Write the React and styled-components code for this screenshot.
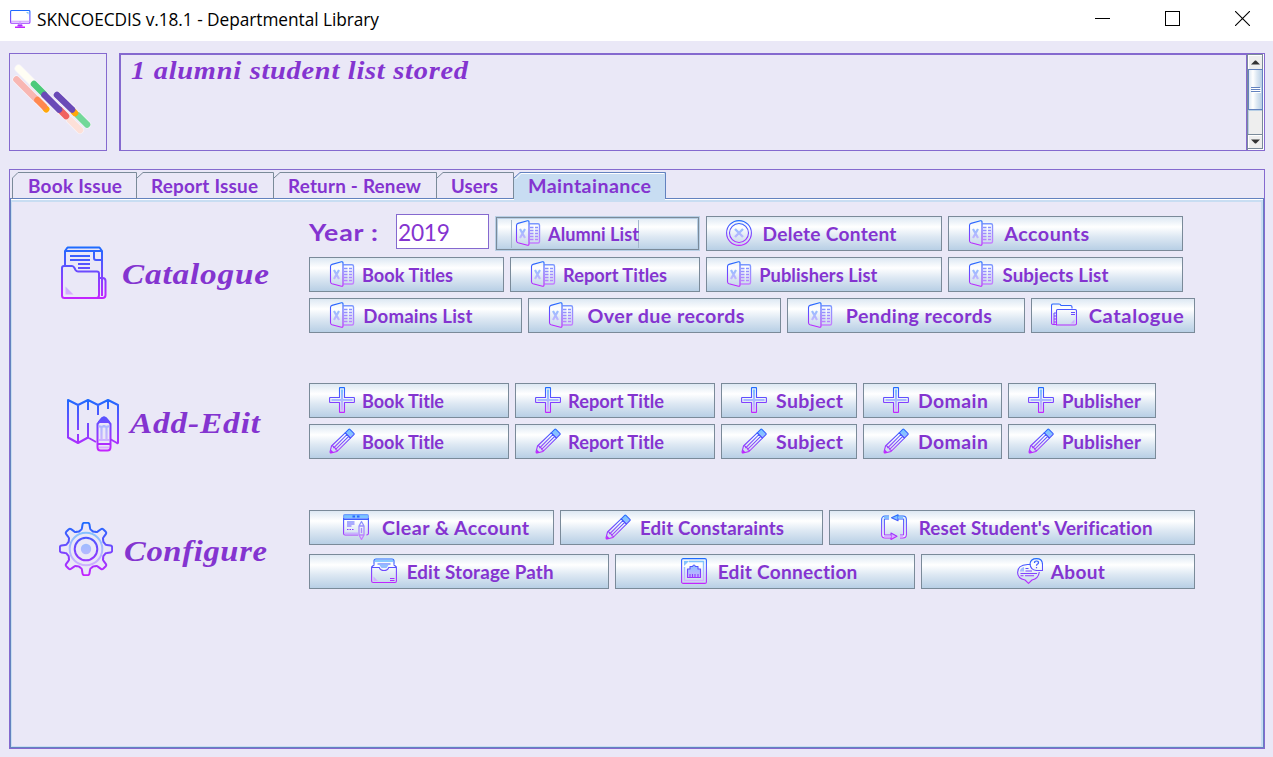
import React, { useLayoutEffect, useRef } from "react";
import styled, { createGlobalStyle } from "styled-components";

const c = {
  bg: "#eae8f7",
  ink: "#8434d0",
  line: "#8569cf",
  steel: "#7a8a99",
  blue: "#6382bf",
  pale: "#c8ddf2",
};

const GlobalStyle = createGlobalStyle`
  *, *::before, *::after { box-sizing: border-box; }
  body { margin: 0; background: ${c.bg}; overflow: hidden; }
`;

const Window = styled.div`
  display: flex;
  flex-direction: column;
  width: 1273px;
  height: 757px;
  background: ${c.bg};
  color: ${c.ink};
  font-family: Lato, "Liberation Sans", sans-serif;
`;

const TitleBar = styled.header`
  display: flex;
  align-items: center;
  height: 41px;
  flex: none;
  padding: 0 23px 2px 10px;
  background: #fff;
  color: #000;
  font: 400 17.5px "Open Sans", "Noto Sans", sans-serif;
`;

const TitleText = styled.div`
  flex: 1;
  padding: 0 0 1px 6px;
`;

const WindowControls = styled.div`
  display: flex;
  align-items: center;
  gap: 55px;
  padding-bottom: 2px;
  svg { display: block; }
`;

const Status = styled.section`
  display: flex;
  flex: none;
  gap: 12px;
  padding: 12px 8px 18px 9px;
`;

const LogoBox = styled.div`
  width: 98px;
  height: 98px;
  border: 1px solid ${c.line};
`;

const MessageBox = styled.div`
  display: flex;
  flex: 1;
  height: 98px;
  border: 1px solid ${c.line};
`;

const MessageText = styled.div`
  flex: 1;
  padding: 0 0 0 10px;
  border: solid ${c.line};
  border-width: 1px 1px 0 1px;
  font: italic 700 25px/32px "Liberation Serif", serif;
`;

const ScrollBar = styled.div`
  display: flex;
  flex-direction: column;
  width: 17px;
  padding: 0 1px 1px 0;
  background: #fff;
  border-left: 1px solid ${c.steel};
`;

const ScrollButton = styled.div`
  display: flex;
  align-items: center;
  justify-content: center;
  height: 15px;
  background: #eee;
  border: solid ${c.steel};
  border-width: 1px 1px ${(p) => (p.$last ? "1px" : "0")} 0;
  box-shadow: inset 1px 1px #fff;
`;

const ScrollThumb = styled.div`
  display: flex;
  flex-direction: column;
  align-items: center;
  justify-content: center;
  gap: 1px;
  height: 41px;
  border: 1px solid ${c.blue};
  background: linear-gradient(90deg, #dde8f3, #fff 30%, #dde8f3 60%, #b8cfe5);
  i { width: 9px; height: 1px; background: ${c.blue}; box-shadow: 1px 1px #fff; }
`;

const ScrollTrack = styled.div`
  flex: 1;
  background: #eee;
  border: solid ${c.steel};
  border-width: 0 1px 0 0;
  box-shadow: inset 1px 1px #b8cfe5;
`;

const Panel = styled.main`
  display: flex;
  flex-direction: column;
  height: 580px;
  margin: 0 8px 0 9px;
  border: 1px solid ${c.line};
`;

const TabStrip = styled.nav`
  display: flex;
  height: 28px;
  flex: none;
  padding: 2px 0 0 2px;
`;

const Tab = styled.div`
  position: relative;
  width: ${(p) => p.$w}px;
  height: ${(p) => (p.$active ? 30 : 27)}px;
  padding: 2px 0 0 ${(p) => p.$pad}px;
  z-index: ${(p) => (p.$active ? 1 : 0)};
  font-size: 18px;
  line-height: 24px;
  font-weight: 700;
  white-space: nowrap;
  svg { position: absolute; inset: 0; z-index: -1; }
`;

const TabBody = styled.div`
  flex: 1;
  display: flex;
  flex-direction: column;
  border: 1px solid ${c.blue};
  box-shadow: inset 0 1px #fff, inset 1px 3px ${c.pale}, inset -2px -1px ${c.pale};
  padding: 15px 0 0 0;
`;

const Section = styled.section`
  display: flex;
  height: ${(p) => p.$h}px;
  margin-bottom: ${(p) => p.$after}px;
`;

const SectionTitle = styled.h2`
  display: flex;
  align-items: center;
  gap: ${(p) => p.$gap}px;
  width: 298px;
  height: 100%;
  margin: 0;
  padding: 0 0 0 ${(p) => p.$pad}px;
  font: italic 700 30px/34px "Liberation Serif", serif;
  svg { flex: none; margin-top: ${(p) => p.$iconTop}px; }
  span { margin-top: ${(p) => p.$textTop}px; }
`;

const Rows = styled.div`
  display: flex;
  flex-direction: column;
  gap: ${(p) => p.$gap}px;
`;

const Row = styled.div`
  display: flex;
  gap: 6px;
  align-items: flex-end;
`;

const YearLabel = styled.label`
  width: 81px;
  height: 37px;
  font-size: 23.5px;
  line-height: 37px;
  font-weight: 700;
`;

const YearInput = styled.div`
  width: 93px;
  height: 35px;
  margin-bottom: 2px;
  padding-left: 1px;
  border: 1px solid ${c.line};
  background: #fff;
  font-size: 23.5px;
  line-height: 35px;
  font-weight: 400;
`;

const Button = styled.button`
  display: flex;
  align-items: center;
  gap: 6px;
  width: ${(p) => p.$w}px;
  height: 35px;
  padding: 0 0 0 ${(p) => p.$pad}px;
  border: 1px solid ${(p) => (p.$focus ? "#b8cfe5" : c.steel)};
  background: linear-gradient(#dde8f3, #fff 30%, #dde8f3 60%, #b8cfe5);
  box-shadow: ${(p) => (p.$focus ? `inset 0 0 0 1px ${c.steel}, inset 0 0 0 2px #b8cfe5` : "none")};
  color: ${c.ink};
  font: 700 18px/24px Lato, "Liberation Sans", sans-serif;
  white-space: nowrap;
  svg { flex: none; margin-bottom: 1px; }
`;

const FocusMark = styled.div`
  display: flex;
  align-items: center;
  gap: 6px;
  height: 28px;
  margin-left: -4px;
  padding-left: 3px;
  border: solid #a3b8cc;
  border-width: 0 1px;
`;

const Caption = styled.div`
  display: flex;
  padding-left: 1px;
`;

const InlineText = styled.span`
  display: inline-block;
  flex: none;
  white-space: nowrap;
  transform-origin: 0 50%;
`;

// Widens the text to the given width, by a wider glyph first and then a little tracking.
function Fit({ w, children }) {
  const ref = useRef(null);
  useLayoutEffect(() => {
    const el = ref.current;
    el.style.width = "auto";
    el.style.letterSpacing = "0px";
    el.style.transform = "none";
    const natural = el.getBoundingClientRect().width;
    const target = w + 1;
    const tracking = ((target - natural) * 0.3) / (children.length - 1);
    const tracked = natural + tracking * (children.length - 1);
    el.style.letterSpacing = `${tracking}px`;
    el.style.transform = `scaleX(${target / tracked})`;
    el.style.width = `${w}px`;
  }, [w, children]);
  return <InlineText ref={ref}>{children}</InlineText>;
}

const Defs = () => (
  <svg width="0" height="0" style={{ position: "absolute" }}>
    <defs>
      {[["s", 26], ["l", 54]].map(([k, h]) => (
        <React.Fragment key={k}>
          <linearGradient id={`${k}d`} gradientUnits="userSpaceOnUse" x1="0" y1="0" x2="0" y2={h}>
            <stop offset="0" stopColor="#1a6dff" />
            <stop offset="1" stopColor="#c822ff" />
          </linearGradient>
          <linearGradient id={`${k}p`} gradientUnits="userSpaceOnUse" x1="0" y1="0" x2="0" y2={h}>
            <stop offset="0" stopColor="#6dc7ff" />
            <stop offset="1" stopColor="#e6abff" />
          </linearGradient>
        </React.Fragment>
      ))}
      <linearGradient id="sm" gradientUnits="userSpaceOnUse" x1="0" y1="0" x2="0" y2="26">
        <stop offset="0" stopColor="#6c9cff" />
        <stop offset="1" stopColor="#cf7bff" />
      </linearGradient>
    </defs>
  </svg>
);

const D = "url(#sd)";
const P = "url(#sp)";
const M = "url(#sm)";

const Small = ({ children }) => (
  <svg width="26" height="26" viewBox="0 0 26 26" fill="none" stroke={D} strokeWidth="1.1" strokeLinejoin="round">
    {children}
  </svg>
);

const icons = {
  excel: (
    <Small>
      <path d="M14.500 3.700h8.500q1.500 0 1.500 1.500v16.300q0 1.500-1.500 1.500H14.500" stroke={M} strokeWidth="1.400" />
      <path d="M15 7.500h3.500M20 7.500h3M15 10.500h3.500M20 10.500h3M15 13.500h3.500M20 13.500h3M15 16.500h3.500M20 16.500h3M15 19.500h3.500M20 19.500h3" stroke={M} strokeWidth="1.500" />
      <path d="M14 2v22q0 1.500-1.500 1.200L3 22.700q-1.500-.5-1.500-2V5.500q0-1.700 1.500-2.100L12.500 .8q1.500-.3 1.500 1.200Z" />
      <path d="M5 9l5 9M10 9l-5 9" stroke={P} strokeWidth="2.200" />
    </Small>
  ),
  remove: (
    <Small>
      <circle cx="13" cy="13" r="12.400" />
      <circle cx="13" cy="13" r="9.500" />
      <path d="M9 9l8 8M17 9l-8 8" stroke={P} strokeWidth="2.400" />
    </Small>
  ),
  folders: (
    <Small>
      <path d="M4 22.500H2q-1.500 0-1.500-1.500V3.500Q.5 2 2 2h6q1.500 0 2 1.500h9.500q1.500 0 1.500 1.500v1.500" />
      <path d="M6.500 7.500h17.500q1.500 0 1.500 1.500v12.500q0 1.500-1.500 1.500H5.500V8.500q0-1 1-1Z" />
      <path d="M5 11H3v11.500h2M3 14h2M3 17h2M3 20h2M20 10.500h4M20 12.500h4" strokeWidth="1" />
      <path d="M23.500 17.500v4h-4Z" fill={P} stroke="none" />
    </Small>
  ),
  plus: (
    <Small>
      <path d="M13 2.500v21M2.500 13h21" stroke={P} strokeWidth="2.200" />
      <path d="M11 .6h4q.5 0 .5.500v9.400h9.400q.5 0 .5.500v4q0 .5-.5.500h-9.400v9.400q0 .5-.5.500h-4q-.5 0-.5-.5v-9.400H1.100q-.5 0-.5-.5v-4q0-.5.5-.5h9.400V1.100q0-.5.5-.5Z" />
    </Small>
  ),
  pencil: (
    <Small>
      <path d="M16.200 4.800l3.500-3.400q.6-.6 1.200 0l4 4q.6.600 0 1.200l-3.500 3.500Z" fill={P} />
      <path d="M16.200 4.800L2.500 18L1 24q0 1 1 1l6-1.500L21.400 10.100ZM2.500 18q2.200-.5 2.200 1.800q2.300-.3 2.100 2q1.700-.2 1.200 1.700M4.700 19.800L18 6.500M6.500 21.500L19.700 8.300" strokeWidth="1.050" />
      <path d="M1.800 21.500l2.900 2.900-3.700 .8Z" fill={D} stroke="none" />
    </Small>
  ),
  form: (
    <Small>
      <path d="M.6 4V2q0-1.400 1.400-1.400h22q1.400 0 1.400 1.400v2.500H.6Z" fill={P} stroke={M} />
      <path d="M9.500 2.500h2.500M14 2.500h2.500" strokeWidth="1.800" />
      <path d="M.6 4v15.500q0 1.500 1.500 1.500H15M25.400 4v15.500q0 1.500-2 1.500M0 5.500h26" />
      <path d="M4 8h7.500M4 10h7.500M4 12h4.500" stroke={M} strokeWidth="1.600" />
      <path d="M4 15.500h1.500M6.500 15.500H8M9 15.500h1.500" />
      <path d="M1.500 19.500H15" stroke={P} strokeWidth="2" />
      <path d="M18.500 7.500l2.500 4.500v9l-2.500 4.500L16 21v-9ZM16 12h5M16 21h5M18.500 14v5" stroke={M} strokeWidth="1.300" />
    </Small>
  ),
  cycle: (
    <Small>
      <path d="M8 3.500H4Q2 3.500 2 5.500v15q0 2 2 2h6M17 3.500h5q2 0 2 2v15q0 2-2 2h-3" strokeWidth="3.800" />
      <path d="M8 3.500H4Q2 3.500 2 5.500v15q0 2 2 2h6M17 3.500h5q2 0 2 2v15q0 2-2 2h-3" stroke="#e3edfa" strokeWidth="1.800" />
      <path d="M17 .8v6l-6.500-3ZM10 19v6.500l6-3.200Z" fill={P} />
      <path d="M3 3.500h5M17 3.500h5M3 22.500h7M19 22.500h3" stroke={P} strokeWidth="1.800" />
    </Small>
  ),
  storage: (
    <Small>
      <path d="M3 6V3q0-2 2-2h16q2 0 2 2v3" />
      <path d="M4 3h18" stroke={P} strokeWidth="1.800" />
      <path d="M6.500 6h13" stroke={M} strokeWidth="1.600" />
      <path d="M8 6.500h10l-2.500 3.500h-5Z" fill={P} stroke="none" />
      <path d="M3.500 6.500L.6 9v14q0 1.500 1.500 1.500h22q1.300 0 1.300-1.500V9l-2.900-2.500M.6 9.500h7.700q1 3 4.700 3t4.700-3h7.700M19 20.500h4.500M19 22.500h4.500" />
      <path d="M2.500 18.500v4.500H7Z" fill={P} stroke="none" />
    </Small>
  ),
  port: (
    <Small>
      <rect x=".6" y=".6" width="24.800" height="24.800" rx="1.500" />
      <path d="M8 3.500h14.500v19h-19V9" stroke={P} strokeWidth="1.400" />
      <path d="M3 3h5L3 8Z" fill={P} stroke="none" />
      <path d="M6.500 19.500v-8.500h2.500V8.500h2.500q1.500-3 3 0h2.500V11h2.500v8.500Z" fill={P} />
      <path d="M9 19v-3M11.500 19v-3M14 19v-3M17 19v-3" />
    </Small>
  ),
  about: (
    <Small>
      <path d="M13.500 6.500h-3Q.6 7 .6 14.500q0 6 7.400 7.500l3.500 3.300 3.500-3.300q6.500-1.300 7.300-8" />
      <path d="M13 6q.5-5.400 6.500-5.400t6 6V12.500h-6.200Q13.500 12 13 6Z" />
      <path d="M17.500 5q0-2 2-2t2 1.700q0 1-1.200 1.600-.8.500-.8 1.500M19.500 9v1.300" strokeWidth="1.200" />
      <path d="M8.500 10.500h3M8.500 13h6.500M3.500 15.500h16.500M3.500 17.800h3M8 17.800h9" />
      <path d="M3 13.500q0-3.500 4-4.500v4.500Z" fill={P} stroke="none" />
    </Small>
  ),
};

const Large = ({ children }) => (
  <svg width="54" height="54" viewBox="0 0 54 54" fill="none" stroke="url(#ld)" strokeWidth="2" strokeLinejoin="round">
    {children}
  </svg>
);

const CatalogueIcon = () => (
  <Large>
    <path d="M6 20V5l2.500-3.500h32L43 5v27M6 5h37M35 5v7q0 2 2 2h6M11 10h20M11 14h20M19 18h12M19 22h12" />
    <path d="M5 20h8q1.500 0 2.500 2l1 2q1 1.500 2.500 1.500h19q2 0 2 2V49q0 3-2.500 3H5.500Q3 52 3 49.500V22q0-2 2-2ZM40 32h3.500q3 0 3 3v14q0 3-3 3H37M43 32v18" />
    <path d="M6.500 40.500v8h8Z" fill="url(#lp)" stroke="none" />
  </Large>
);

const MapIcon = () => (
  <Large>
    <path d="M31 44l-8-4.500-10 5.500-10-5.500V2l10 5 10-5 10 5 10-5 10 5v37.500q0 1-1 .5l-7-4M13 7v25M13 36v9M23 2v10M23 25v15M33 7v10M43 2v9" />
    <path d="M32.500 26l4.500-5.500q2-2 4 0l4.500 5.500V49q0 3.500-3 3.500h-7q-3 0-3-3.500ZM32 46h14" fill={c.bg} />
    <path d="M34 24l3.500-4q1.500-1 3 0l3.500 4Z" fill="url(#ld)" />
    <path d="M34 28q2.500 1.500 5 0q2.500 1.500 5 0M36.500 29v12M41.500 29v12M34 42h10M34 49.500h10" stroke="url(#lp)" strokeWidth="2.200" />
  </Large>
);

const gearPath = (() => {
  const pt = (r, deg) => {
    const a = ((deg - 90) * Math.PI) / 180;
    return `${(27 + r * Math.cos(a)).toFixed(2)} ${(27 + r * Math.sin(a)).toFixed(2)}`;
  };
  let d = "";
  for (let k = 0; k < 8; k += 1) {
    const a = k * 45;
    d += `${k ? "L" : "M"}${pt(19.5, a - 17)}Q${pt(19.8, a - 12)} ${pt(21.2, a - 11)}L${pt(24.8, a - 8)}`;
    d += `Q${pt(26.2, a - 7)} ${pt(26.2, a - 4)}L${pt(26.2, a + 4)}Q${pt(26.2, a + 7)} ${pt(24.8, a + 8)}`;
    d += `L${pt(21.2, a + 11)}Q${pt(19.8, a + 12)} ${pt(19.5, a + 17)}`;
    d += `Q${pt(18.2, a + 22.5)} ${pt(19.5, a + 28)}`;
  }
  return `${d}Z`;
})();

const GearIcon = () => (
  <Large>
    <path d={gearPath} />
    <circle cx="27" cy="27" r="16.300" stroke="url(#lp)" />
    <circle cx="27" cy="27" r="11.300" />
    <circle cx="27" cy="27" r="5.200" fill="url(#lp)" stroke="none" />
  </Large>
);

const bars = [
  [18.5, 68.500, 32, 82, "#fffef4"],
  [16.5, 79.500, 36, 99, "#f8b7b3"],
  [46, 109, 46.200, 109.200, "#ffa70a"],
  [37.500, 100, 44, 106.500, "#ff8850"],
  [34, 84, 44, 94, "#4cca7b"],
  [70, 120, 80, 130, "#fde0d8"],
  [60, 110, 66, 116, "#f0625f"],
  [44.500, 95, 59, 109.500, "#6a4ab7"],
  [78, 115.500, 87, 124.500, "#73d899"],
  [74, 112, 75, 113, "#ffa70a"],
  [57, 95, 72, 109.500, "#6a4ab7"],
];

const Logo = () => (
  <svg width="96" height="96" viewBox="10 54 96 96" strokeLinecap="round">
    {bars.map(([x1, y1, x2, y2], i) => (
      <line key={i} {...{ x1, y1, x2, y2 }} stroke="#f7f4fa" strokeWidth="8" />
    ))}
    {bars.map(([x1, y1, x2, y2, color], i) => (
      <line key={i} {...{ x1, y1, x2, y2 }} stroke={color} strokeWidth="6.600" />
    ))}
  </svg>
);

const MonitorIcon = () => (
  <svg width="21" height="19" viewBox="0 0 21 19" fill="none" strokeWidth="1.100">
    <defs>
      <linearGradient id="mon" gradientUnits="userSpaceOnUse" x1="0" y1="0" x2="0" y2="18">
        <stop offset="0" stopColor="#1a6dff" />
        <stop offset="1" stopColor="#c822ff" />
      </linearGradient>
    </defs>
    <path d="M.6 1.500q0-1 1-1h17.300q1 0 1 1v10.800q0 1-1 1H1.600q-1 0-1-1Z" stroke="url(#mon)" />
    <path d="M1 11.200h18.500M10 11v6M8 14.500h4" stroke="#cf9bff" />
    <path d="M16 2h2.500v2.500Z" fill="#7cc4ff" />
    <path d="M5 17.300h10M7.500 15.500h5" stroke="url(#mon)" strokeWidth="1.500" />
  </svg>
);

const tabs = [
  ["Book Issue", 125, 16, 93],
  ["Report Issue", 137, 14, 106],
  ["Return - Renew", 163, 14, 132],
  ["Users", 77, 14, 46],
  ["Maintainance", 152, 14, 122],
];

function TabItem({ item: [label, w, pad, textW], first, active }) {
  const stroke = active ? c.blue : c.steel;
  return (
    <Tab $w={w} $pad={pad - 0.5} $active={active}>
      <svg width={w} height={active ? 30 : 27} fill="none">
        {active && <path d={`M0 30V6L6 1h${w - 7}v29Z`} fill={c.pale} />}
        {active && <path d={`M1.500 7L7 1.500h${w - 9}`} stroke="#fff" />}
        <path d={`M${first ? ".5 27V6" : "0 6"}L6 .5H${w - 0.5}V27`} stroke={stroke} />
      </svg>
      <Fit w={textW}>{label}</Fit>
    </Tab>
  );
}

function Action({ item: [icon, label, w, textW, pad = 20], focus }) {
  const content = (
    <>
      {icons[icon]}
      <Caption><Fit w={textW}>{label}</Fit></Caption>
    </>
  );
  return (
    <Button $w={w} $pad={pad - 1} $focus={focus}>
      {focus ? <FocusMark>{content}</FocusMark> : content}
    </Button>
  );
}

const ActionRow = ({ items }) => (
  <Row>
    {items.map((item) => <Action key={item[1]} item={item} />)}
  </Row>
);

const editTargets = [
  ["Book Title", 200, 81],
  ["Report Title", 200, 95],
  ["Subject", 136, 66],
  ["Domain", 139, 69],
  ["Publisher", 148, 78],
];

export default function App() {
  return (
    <Window>
      <GlobalStyle />
      <Defs />
      <TitleBar>
        <MonitorIcon />
        <TitleText><Fit w={341}>SKNCOECDIS v.18.1 - Departmental Library</Fit></TitleText>
        <WindowControls>
          <svg width="15" height="15"><path d="M0 7.500h15" stroke="#000" /></svg>
          <svg width="15" height="15"><rect x=".5" y=".5" width="14" height="14" fill="none" stroke="#000" /></svg>
          <svg width="15" height="15"><path d="M0 0l15 15M15 0L0 15" stroke="#000" strokeWidth="1.100" /></svg>
        </WindowControls>
      </TitleBar>

      <Status>
        <LogoBox><Logo /></LogoBox>
        <MessageBox>
          <MessageText><Fit w={336}>1 alumni student list stored</Fit></MessageText>
          <ScrollBar>
            <ScrollButton><svg width="9" height="5"><path d="M4 .5h1L9 4.500H0Z" fill="#333" /></svg></ScrollButton>
            <ScrollThumb><i /><i /><i /></ScrollThumb>
            <ScrollTrack />
            <ScrollButton $last><svg width="9" height="5"><path d="M0 .5h9L5 4.500H4Z" fill="#333" /></svg></ScrollButton>
          </ScrollBar>
        </MessageBox>
      </Status>

      <Panel>
        <TabStrip>
          {tabs.map((t, i) => <TabItem key={t[0]} item={t} first={i === 0} active={i === 4} />)}
        </TabStrip>
        <TabBody>
          <Section $h={119} $after={50}>
            <SectionTitle $pad={48} $gap={9} $iconTop={-2} $textTop={1}>
              <CatalogueIcon />
              <Fit w={146}>Catalogue</Fit>
            </SectionTitle>
            <Rows $gap={6}>
              <Row>
                <YearLabel><Fit w={68}>Year :</Fit></YearLabel>
                <YearInput><Fit w={51}>2019</Fit></YearInput>
                <Action item={["excel", "Alumni List", 205, 90]} focus />
                <Action item={["remove", "Delete Content", 236, 133]} />
                <Action item={["excel", "Accounts", 235, 84]} />
              </Row>
              <ActionRow
                items={[
                  ["excel", "Book Titles", 195, 90],
                  ["excel", "Report Titles", 190, 103],
                  ["excel", "Publishers List", 236, 117],
                  ["excel", "Subjects List", 235, 105],
                ]}
              />
              <ActionRow
                items={[
                  ["excel", "Domains List", 213, 108],
                  ["excel", "Over due records", 253, 156],
                  ["excel", "Pending records", 238, 145],
                  ["folders", "Catalogue", 164, 94],
                ]}
              />
            </Rows>
          </Section>

          <Section $h={76} $after={51}>
            <SectionTitle $pad={54} $gap={11} $iconTop={7} $textTop={3}>
              <MapIcon />
              <Fit w={129}>Add-Edit</Fit>
            </SectionTitle>
            <Rows $gap={6}>
              <ActionRow items={editTargets.map(([l, w, t]) => ["plus", l, w, t])} />
              <ActionRow items={editTargets.map(([l, w, t]) => ["pencil", l, w, t])} />
            </Rows>
          </Section>

          <Section $h={79} $after={0}>
            <SectionTitle $pad={48} $gap={11} $iconTop={-2} $textTop={3}>
              <GearIcon />
              <Fit w={142}>Configure</Fit>
            </SectionTitle>
            <Rows $gap={9}>
              <ActionRow
                items={[
                  ["form", "Clear & Account", 245, 146, 34],
                  ["pencil", "Edit Constaraints", 263, 143, 45],
                  ["cycle", "Reset Student's Verification", 366, 233, 52],
                ]}
              />
              <ActionRow
                items={[
                  ["storage", "Edit Storage Path", 300, 146, 62],
                  ["port", "Edit Connection", 300, 139, 66],
                  ["about", "About", 274, 53, 96],
                ]}
              />
            </Rows>
          </Section>
        </TabBody>
      </Panel>
    </Window>
  );
}
